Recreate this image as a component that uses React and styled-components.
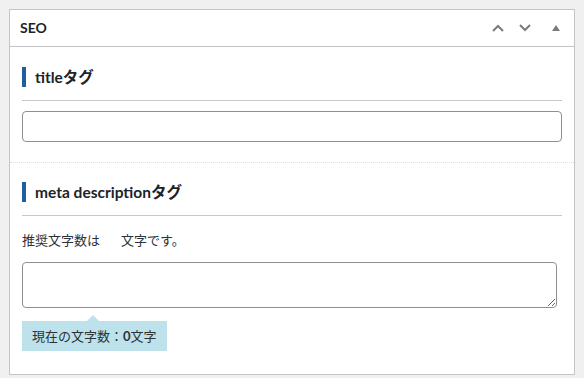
import React from "react";
import styled, { createGlobalStyle } from "styled-components";

const Global = createGlobalStyle`
  html, body { margin: 0; padding: 0; background: #f0f0f1; }
  body { font-family: "Lato", "Noto Sans CJK JP", sans-serif; color: #1d2327; }
  * { box-sizing: border-box; }
`;

const Page = styled.div`
  padding: 9px 9px 0 9px;
`;

const Panel = styled.div`
  background: #fff;
  border: 1px solid #c3c4c7;
`;

const Header = styled.div`
  display: flex;
  align-items: center;
  height: 37px;
  border-bottom: 1px solid #c3c4c7;
  padding-left: 10px;
`;

const Title = styled.h2`
  flex: 1;
  margin: 0;
  font-size: 14px;
  font-weight: 700;
  line-height: 1;
`;

const HeaderButton = styled.button`
  width: ${(p) => p.$w}px;
  height: 36px;
  border: 0;
  padding: 0;
  background: none;
  display: flex;
  align-items: center;
  justify-content: center;
  color: #787c82;
`;

const Section = styled.div`
  padding: ${(p) => p.$top}px 12px ${(p) => p.$bottom}px 12px;
  border-top: ${(p) => (p.$dotted ? "1px dotted #dcdcde" : "0")};
`;

const Heading = styled.h3`
  margin: 0;
  padding-bottom: 13px;
  border-bottom: 1px solid #c8c8c8;
`;

const HeadingLabel = styled.span`
  display: block;
  border-left: 4px solid #1f5f9c;
  padding-left: 9px;
  font-size: 15.5px;
  font-weight: 700;
  line-height: 20px;
  color: #1d2327;
`;

const TextInput = styled.input`
  display: block;
  width: 100%;
  height: 31px;
  margin-top: 10px;
  border: 1px solid #8c8f94;
  border-radius: 4px;
  background: #fff;
  font: inherit;
`;

const Note = styled.p`
  margin: 14px 0 0 0;
  font-size: 13px;
  line-height: 20px;
  color: #2c3338;
`;

const Count = styled.span`
  display: inline-block;
  width: 21px;
`;

const TextArea = styled.textarea`
  display: block;
  width: 535px;
  height: 46px;
  margin-top: 12px;
  border: 1px solid #8c8f94;
  border-radius: 4px;
  font: inherit;
`;

const Tooltip = styled.div`
  position: relative;
  display: inline-block;
  margin-top: 13px;
  height: 30px;
  padding: 0 10px;
  background: #bee2ec;
  font-size: 13px;
  line-height: 30px;
  color: #2c3338;

  &::before {
    content: "";
    position: absolute;
    left: 65px;
    top: -6px;
    border-left: 6px solid transparent;
    border-right: 6px solid transparent;
    border-bottom: 6px solid #bee2ec;
  }
`;

const Strong = styled.b`
  font-weight: 700;
`;

const Up = () => (
  <svg width="14" height="10" viewBox="0 0 14 10">
    <polyline points="2,8 7,3 12,8" fill="none" stroke="#787c82" strokeWidth="2" />
  </svg>
);
const Down = () => (
  <svg width="14" height="10" viewBox="0 0 14 10">
    <polyline points="2,2 7,7 12,2" fill="none" stroke="#787c82" strokeWidth="2" />
  </svg>
);
const Tri = () => (
  <svg width="8" height="6" viewBox="0 0 8 6">
    <polygon points="4,0 8,6 0,6" fill="#787c82" />
  </svg>
);

export default function App() {
  return (
    <>
      <Global />
      <Page>
        <Panel>
          <Header>
            <Title>SEO</Title>
            <HeaderButton $w={27}><Up /></HeaderButton>
            <HeaderButton $w={27}><Down /></HeaderButton>
            <HeaderButton $w={36}><Tri /></HeaderButton>
          </Header>
          <Section $top={20} $bottom={20}>
            <Heading><HeadingLabel>titleタグ</HeadingLabel></Heading>
            <TextInput type="text" />
          </Section>
          <Section $dotted $top={19} $bottom={23}>
            <Heading><HeadingLabel>meta descriptionタグ</HeadingLabel></Heading>
            <Note>推奨文字数は<Count></Count>文字です。</Note>
            <TextArea />
            <Tooltip>現在の文字数：<Strong>0</Strong>文字</Tooltip>
          </Section>
        </Panel>
      </Page>
    </>
  );
}
